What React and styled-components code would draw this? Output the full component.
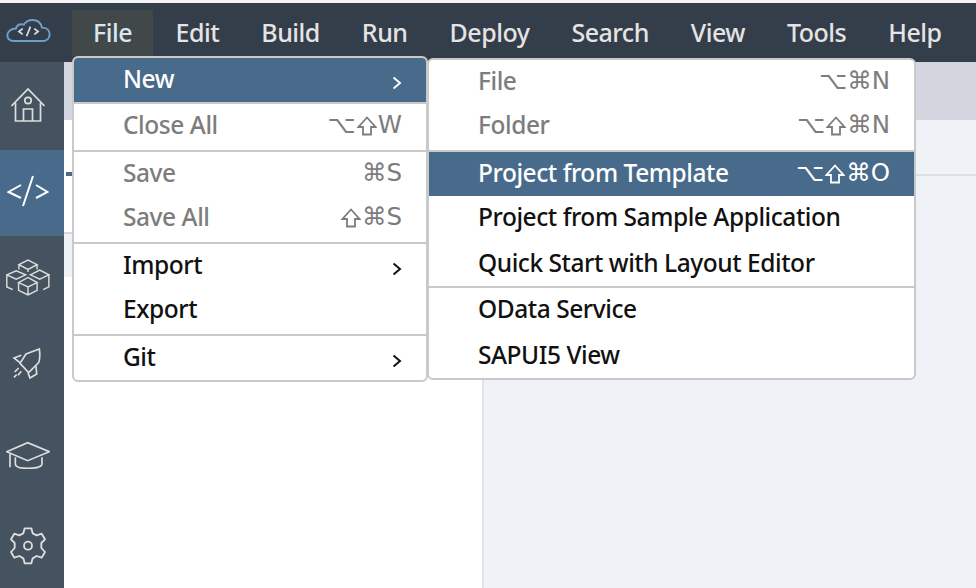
import React from 'react'
import styled, { createGlobalStyle } from 'styled-components'

const Global = createGlobalStyle`
  html, body { margin: 0; padding: 0; background: #fff; }
  body { font-family: "Noto Sans", "Open Sans", sans-serif; }
`

const Page = styled.div`
  width: 976px;
  height: 588px;
  position: relative;
  overflow: hidden;
  display: flex;
  flex-direction: column;
  background: #fff;
`

const TopStrip = styled.div`
  height: 3px;
  background: #f4f4f4;
`

const MenuBar = styled.div`
  height: 59px;
  background: #343e4a;
  display: flex;
`

const LogoBox = styled.div`
  width: 72px;
  display: flex;
  align-items: center;
  padding: 0 0 4px 6px;
  box-sizing: border-box;
`

const BarItem = styled.div`
  height: 46px;
  margin-top: 7px;
  padding: 0 21px 3px;
  box-sizing: border-box;
  display: flex;
  align-items: center;
  font-size: 25px;
  font-weight: 500;
  letter-spacing: -0.5px;
  color: ${(p) => (p.$open ? '#dce6f0' : '#e4e4e4')};
  background: ${(p) => (p.$open ? '#414849' : 'transparent')};
  margin-right: ${(p) => (p.$open ? '1.5px' : '0')};
`

const Body = styled.div`
  flex: 1;
  display: flex;
  min-height: 0;
`

const Sidebar = styled.div`
  width: 64px;
  flex: none;
  background: #44535f;
  display: flex;
  flex-direction: column;
`

const SideItem = styled.div`
  height: ${(p) => p.$h}px;
  flex: none;
  box-sizing: border-box;
  padding: 0 8px ${(p) => p.$pb || 0}px 0;
  display: flex;
  align-items: center;
  justify-content: center;
  color: #dedede;
  background: ${(p) => (p.$active ? '#486a8b' : 'transparent')};
`

const Content = styled.div`
  flex: 1;
  display: flex;
  flex-direction: column;
`

const Band = styled.div`
  height: 58px;
  background: #d3d6de;
`

const Split = styled.div`
  flex: 1;
  display: flex;
`

const LeftPane = styled.div`
  width: 418px;
  border-right: 2px solid #e1e3e8;
  display: flex;
  flex-direction: column;
`

const TabMark = styled.div`
  width: 6px;
  height: 4px;
  margin: 52px 0 0 2px;
  background: #486a8b;
`

const PaneRow = styled.div`
  height: 43px;
  margin-top: 56px;
  border-top: 2px solid #d6d8dd;
  background: #eef1f5;
`

const RightPane = styled.div`
  flex: 1;
  background: #eff2f7;
`

const PaneHeader = styled.div`
  height: 54px;
  border-bottom: 2px solid #dcdfe5;
`

const Menu = styled.div`
  position: absolute;
  left: ${(p) => p.$x}px;
  top: ${(p) => p.$y}px;
  width: ${(p) => p.$w}px;
  background: #fff;
  border: 2px solid #c9c9c9;
  border-radius: 6px;
  box-sizing: border-box;
  overflow: hidden;
`

const Row = styled.div`
  height: 44px;
  box-sizing: border-box;
  margin: ${(p) => p.$before || 0}px 0 ${(p) => p.$after || 0}px;
  display: flex;
  align-items: center;
  justify-content: space-between;
  padding: 0 24px 3px 49px;
  font-size: 24.5px;
  font-weight: 500;
  letter-spacing: -0.45px;
  color: ${(p) => (p.$selected ? '#fff' : p.$disabled ? '#7d7d7d' : '#111')};
  background: ${(p) => (p.$selected ? '#486a8b' : 'transparent')};
`

const Divider = styled.div`
  height: 2px;
  background: #c9c9c9;
`

const Keys = styled.span`
  display: inline-flex;
  align-items: center;
  gap: 1px;
  font-family: "DejaVu Sans", "Noto Sans", sans-serif;
  font-size: 24.5px;
  font-weight: 400;
  letter-spacing: 0;
`

const ShiftGlyph = styled.svg`
  width: 20px;
  height: 20px;
  margin-top: 2px;
  fill: none;
  stroke: currentColor;
  stroke-width: 1.8;
`

const Shift = () => (
  <ShiftGlyph viewBox="0 0 20 20">
    <path d="M10 1.5 18.5 11H14v7.5H6V11H1.5z" />
  </ShiftGlyph>
)

const Chevron = styled.svg`
  width: 10px;
  height: 14px;
  margin-top: 8px;
  fill: none;
  stroke: currentColor;
  stroke-width: 2;
`

const Arrow = () => (
  <Chevron viewBox="0 0 10 14">
    <path d="M1.5 1.5 8 7l-6.5 5.5" />
  </Chevron>
)

const Logo = () => (
  <svg width="45" height="25" viewBox="0 0 46 26" fill="none" stroke="#6f9fc8" strokeWidth="2">
    <path d="M8 24h30c4 0 7-3 7-7s-3-7-8-7c-1-5-5-8-10-8-4 0-7 2-9 5-2-1-7-1-8 4-5 0-9 3-9 7s3 6 7 6z" />
    <path d="M17 11l-4 3 4 3M29 11l4 3-4 3M25 9l-4 10" stroke="#cfe0ee" strokeWidth="1.8" />
  </svg>
)

const HomeIcon = () => (
  <svg width="34" height="34" viewBox="0 0 34 34" fill="none" stroke="currentColor" strokeWidth="1.7">
    <path d="M.5 18 17 1l16.5 17" />
    <path d="M4.5 15v18h25V15" />
    <circle cx="17" cy="12.5" r="3.2" />
    <path d="M12.5 33V21h9v12" />
  </svg>
)

const CodeIcon = () => (
  <svg width="42" height="32" viewBox="0 0 42 32" fill="none" stroke="#fff" strokeWidth="2">
    <path d="M14 10 1.5 17 14 23M29 10l11.5 7L29 23M26 1 16 31" />
  </svg>
)

const BoxesIcon = () => (
  <svg width="44" height="37" viewBox="20 355 130 110" fill="none" stroke="currentColor" strokeWidth="4.2">
    <path d="M58 372l27-14 27 14-27 14zM58 372v14M112 372v14M85 386v8" />
    <path d="M22 402l28-12 28 12-28 13zM92 402l28-14 27 14-27 13z" />
    <path d="M22 402v36l18 8M147 402v36l-17 8" />
    <path d="M57 425l28-15 27 15-27 13zM57 425v23l28 14 27-14v-23M85 438v24" />
  </svg>
)

const RocketIcon = () => (
  <svg width="44" height="44" viewBox="0 0 132 132" fill="none" stroke="currentColor" strokeWidth="5">
    <path d="M100 15 60 30 42 58l26 28 30-30c4-12 4-28 2-41z" />
    <path d="M46 34l-22 8 18 14M90 66l2 24-20 12-6-16" />
    <path d="M38 72 26 84M46 82 36 94M32 92l-8 8" />
  </svg>
)

const CapIcon = () => (
  <svg width="44" height="28" viewBox="20 183 132 84" fill="none" stroke="currentColor" strokeWidth="5">
    <path d="M22 215l63-27 65 27-65 27z" />
    <path d="M32 222v40M48 232v20c0 9 16 13 37 13s43-4 43-13v-20" />
  </svg>
)

const GearIcon = () => (
  <svg width="44" height="44" viewBox="0 0 132 132" fill="none" stroke="currentColor" strokeWidth="5.5" strokeLinejoin="round">
    <path d="M56 13h20l4 15 12 6 15-5 10 17-11 11v15l11 12-10 17-15-5-12 7-4 15H56l-4-15-12-7-15 5-10-17 11-12V57L15 46l10-17 15 5 12-6z" />
    <circle cx="66" cy="65" r="12" />
  </svg>
)

const barItems = ['Edit', 'Build', 'Run', 'Deploy', 'Search', 'View', 'Tools', 'Help']

export default function App() {
  return (
    <Page>
      <Global />
      <TopStrip />
      <MenuBar>
        <LogoBox>
          <Logo />
        </LogoBox>
        <BarItem $open>File</BarItem>
        {barItems.map((name) => (
          <BarItem key={name}>{name}</BarItem>
        ))}
      </MenuBar>
      <Body>
        <Sidebar>
          <SideItem $h={88} $pb={2}><HomeIcon /></SideItem>
          <SideItem $h={86} $pb={4} $active><CodeIcon /></SideItem>
          <SideItem $h={82}><BoxesIcon /></SideItem>
          <SideItem $h={96}><RocketIcon /></SideItem>
          <SideItem $h={82}><CapIcon /></SideItem>
          <SideItem $h={100}><GearIcon /></SideItem>
        </Sidebar>
        <Content>
          <Band />
          <Split>
            <LeftPane>
              <TabMark />
              <PaneRow />
            </LeftPane>
            <RightPane>
              <PaneHeader />
            </RightPane>
          </Split>
        </Content>
      </Body>

      <Menu $x={72} $y={56} $w={356}>
        <Row $selected>New <Arrow /></Row>
        <Divider />
        <Row $disabled $after={2}>Close All <Keys>⌥<Shift />W</Keys></Row>
        <Divider />
        <Row $disabled>Save <Keys>⌘S</Keys></Row>
        <Row $disabled $after={2}>Save All <Keys><Shift />⌘S</Keys></Row>
        <Divider />
        <Row>Import <Arrow /></Row>
        <Row $after={2}>Export</Row>
        <Divider />
        <Row>Git <Arrow /></Row>
      </Menu>

      <Menu $x={427} $y={58} $w={489}>
        <Row $disabled>File <Keys>⌥⌘N</Keys></Row>
        <Row $disabled $after={2}>Folder <Keys>⌥<Shift />⌘N</Keys></Row>
        <Divider />
        <Row $selected>Project from Template <Keys>⌥<Shift />⌘O</Keys></Row>
        <Row>Project from Sample Application</Row>
        <Row $before={2}>Quick Start with Layout Editor</Row>
        <Divider />
        <Row>OData Service</Row>
        <Row $before={2}>SAPUI5 View</Row>
      </Menu>
    </Page>
  )
}
